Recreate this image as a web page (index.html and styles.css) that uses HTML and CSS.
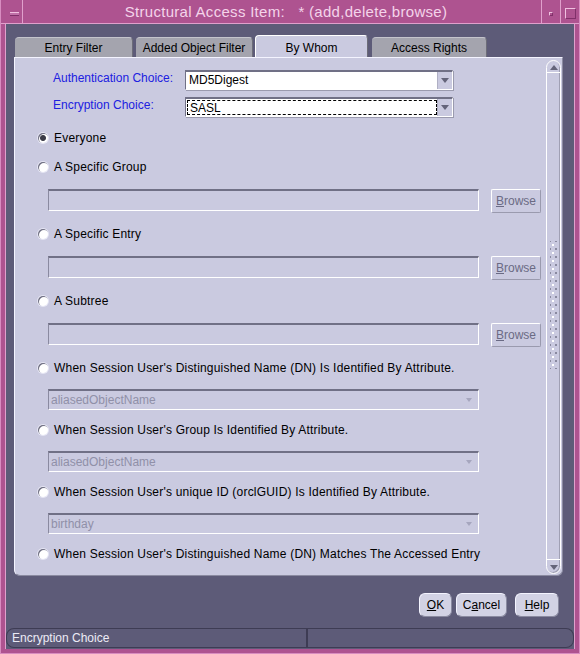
FILE: index.html
```html
<!DOCTYPE html>
<html>
<head>
<title>Structural Access Item</title>
<link rel="stylesheet" href="styles.css">
</head>
<body>
<div class="window">
	<div class="titlebar">
		<div class="tbBtn menuBtn"><span class="menuGlyph"></span></div>
		<div class="title">Structural Access Item:&nbsp;&nbsp; * (add,delete,browse)</div>
		<div class="tbBtn minBtn"><span class="minGlyph"></span></div>
		<div class="tbBtn maxBtn"><span class="maxGlyph"></span></div>
	</div>
	<div class="frameBody">
		<div class="tabs">
			<div class="tab tab1">Entry Filter</div>
			<div class="tab tab2">Added Object Filter</div>
			<div class="tab tab3 active">By Whom</div>
			<div class="tab tab4">Access Rights</div>
		</div>
		<div class="panel">
			<div class="content">
				<div class="choices">
					<div class="lbl">Authentication Choice:</div>
					<div class="combo"><div class="comboText">MD5Digest</div><div class="comboArrow"><span class="tri"></span></div></div>
					<div class="lbl">Encryption Choice:</div>
					<div class="combo focus"><div class="comboText">SASL</div><div class="comboArrow"><span class="tri"></span></div></div>
				</div>

				<div class="radioRow first"><span class="radio checked"></span>Everyone</div>

				<div class="radioRow"><span class="radio"></span>A Specific Group</div>
				<div class="fieldRow"><div class="field"></div><div class="browseBtn"><u>B</u>rowse</div></div>

				<div class="radioRow"><span class="radio"></span>A Specific Entry</div>
				<div class="fieldRow"><div class="field"></div><div class="browseBtn"><u>B</u>rowse</div></div>

				<div class="radioRow"><span class="radio"></span>A Subtree</div>
				<div class="fieldRow"><div class="field"></div><div class="browseBtn"><u>B</u>rowse</div></div>

				<div class="radioRow"><span class="radio"></span>When Session User's Distinguished Name (DN) Is Identified By Attribute.</div>
				<div class="attrCombo"><div class="comboText">aliasedObjectName</div><span class="tri"></span></div>

				<div class="radioRow short"><span class="radio"></span>When Session User's Group Is Identified By Attribute.</div>
				<div class="attrCombo"><div class="comboText">aliasedObjectName</div><span class="tri"></span></div>

				<div class="radioRow short"><span class="radio"></span>When Session User's unique ID (orclGUID) Is Identified By Attribute.</div>
				<div class="attrCombo"><div class="comboText">birthday</div><span class="tri"></span></div>

				<div class="radioRow short"><span class="radio"></span>When Session User's Distinguished Name (DN) Matches The Accessed Entry</div>
			</div>
			<div class="scrollbar">
				<div class="sbUp"><span class="triUp"></span></div>
				<div class="sbTrack"><div class="grip"></div></div>
				<div class="sbDown"><span class="tri"></span></div>
			</div>
		</div>
		<div class="actions">
			<div class="btn okBtn"><u>O</u>K</div>
			<div class="btn cancelBtn">C<u>a</u>ncel</div>
			<div class="btn helpBtn"><u>H</u>elp</div>
		</div>
		<div class="status">
			<div class="statusCell left">Encryption Choice</div>
			<div class="statusCell right"></div>
		</div>
	</div>
</div>
</body>
</html>
```
FILE: styles.css
```css
html, body {
	margin: 0;
	padding: 0;
	background: #5d5b78;
}

body {
	font-family: "Liberation Sans", Arial, sans-serif;
	font-size: 12px;
	color: #000;
}

.window {
	width: 580px;
	height: 654px;
	background: #ae5390;
	display: flex;
	flex-direction: column;
	box-sizing: border-box;
	border: 1px solid #d88cc0;
	border-top: none;
}

/* title bar */
.titlebar {
	height: 23px;
	display: flex;
	border-bottom: 1px solid #e0a0cc;
}

.tbBtn {
	position: relative;
	border-right: 1px solid #e0a0cc;
}

.menuBtn {
	width: 21px;
}

.menuGlyph {
	position: absolute;
	left: 9px;
	top: 12px;
	width: 9px;
	height: 2px;
	border-top: 1px solid #f0c0e0;
	border-bottom: 1px solid #80306a;
	background: #c070a8;
}

.title {
	flex: 1;
	text-align: center;
	color: #f4d4ea;
	font-size: 15px;
	line-height: 24px;
	letter-spacing: 0.3px;
	border-right: 1px solid #e0a0cc;
	padding-left: 8px;
}

.minBtn {
	width: 18px;
}

.minGlyph {
	position: absolute;
	left: 7px;
	top: 12px;
	width: 2px;
	height: 2px;
	border-top: 1px solid #f0c0e0;
	border-left: 1px solid #f0c0e0;
	border-bottom: 1px solid #80306a;
	border-right: 1px solid #80306a;
}

.maxBtn {
	width: 18px;
	border-right: none;
}

.maxGlyph {
	position: absolute;
	left: 4px;
	top: 8px;
	width: 9px;
	height: 9px;
	border-top: 1px solid #f0c0e0;
	border-left: 1px solid #f0c0e0;
	border-bottom: 1px solid #80306a;
	border-right: 1px solid #80306a;
}

/* main body */
.frameBody {
	flex: 1;
	margin: 0 4px 4px 4px;
	background: #5d5b78;
	display: flex;
	flex-direction: column;
	padding-top: 13px;
	border-left: 1px solid #e0a0cc;
	border-right: 1px solid #e0a0cc;
}

.tabs {
	display: flex;
	height: 20px;
	margin-left: 9px;
}

.tab {
	height: 20px;
	box-sizing: border-box;
	background: #a4a4ae;
	text-align: center;
	line-height: 21px;
	border-radius: 4px 4px 0 0;
	border-top: 1px solid #c4c4cc;
	border-right: 1px solid #6c6c78;
}

.tab1 { width: 118px; margin-right: 3px; }
.tab2 { width: 117px; margin-right: 2px; }
.tab3 { width: 113px; margin-right: 4px; }
.tab4 { width: 115px; }

.tab.active {
	background: #cacae0;
	border-top: 1px solid #fff;
	border-left: 1px solid #fff;
	border-right: 1px solid #6c6c78;
	height: 22px;
	margin-top: -2px;
	line-height: 24px;
}

.panel {
	margin-left: 8px;
	width: 549px;
	height: 519px;
	box-sizing: border-box;
	background: #cacae0;
	border-left: 1px solid #f4f4ff;
	border-top: 1px solid #f4f4ff;
	border-right: 1px solid #8a8aa0;
	border-bottom: 1px solid #8a8aa0;
	border-radius: 0 0 6px 6px;
	display: flex;
}

.content {
	flex: 1;
	padding-top: 12px;
}

.choices {
	display: grid;
	grid-template-columns: 132px 268px;
	grid-row-gap: 7px;
	padding-left: 38px;
}

.lbl {
	color: #2020e0;
	line-height: 16px;
}

.combo {
	height: 20px;
	box-sizing: border-box;
	display: flex;
	background: #fff;
	border-top: 2px solid #707086;
	border-left: 1px solid #707086;
	border-bottom: 1px solid #fff;
	border-right: 1px solid #fff;
	box-shadow: 1px 1px 0 #9a9aae;
}

.comboText {
	flex: 1;
	line-height: 17px;
	padding-left: 3px;
}

.combo.focus .comboText {
	border: 1px dashed #000;
	line-height: 15px;
	margin: 1px 0 1px 1px;
	padding-left: 2px;
}

.comboArrow {
	width: 14px;
	background: #cacae0;
	display: flex;
	align-items: center;
	justify-content: center;
	border-left: 1px solid #b0b0c4;
}

.tri {
	width: 0;
	height: 0;
	border-left: 4px solid transparent;
	border-right: 4px solid transparent;
	border-top: 5px solid #64647a;
}

.triUp {
	width: 0;
	height: 0;
	border-left: 4px solid transparent;
	border-right: 4px solid transparent;
	border-bottom: 5px solid #64647a;
}

/* radio rows */
.radioRow {
	height: 16px;
	line-height: 16px;
	display: flex;
	align-items: center;
	padding-left: 23px;
	margin-top: 13px;
	letter-spacing: 0.2px;
}

.radioRow.first {
	margin-top: 13px;
}

.radioRow.short {
	margin-top: 12px;
}

.radio {
	width: 10px;
	height: 10px;
	border-radius: 50%;
	background: #fff;
	box-shadow: inset 1px 1px 0 #6c6c80, 0 0 0 1px #e6e6f4;
	margin-right: 6px;
	flex: none;
}

.radio.checked {
	background: radial-gradient(circle, #3c3c48 0, #3c3c48 2.5px, #fff 3.5px);
}

.fieldRow {
	display: flex;
	height: 24px;
	margin-top: 14px;
	padding-left: 33px;
}

.field {
	width: 431px;
	height: 22px;
	box-sizing: border-box;
	border-top: 2px solid #707086;
	border-left: 1px solid #8a8aa0;
	border-bottom: 1px solid #fff;
	border-right: 1px solid #fff;
}

.browseBtn {
	width: 50px;
	height: 24px;
	box-sizing: border-box;
	margin-left: 12px;
	border: 1px solid #fff;
	border-right-color: #9a9aae;
	border-bottom-color: #9a9aae;
	border-radius: 2px;
	color: #6a6a84;
	text-align: center;
	line-height: 22px;
}

.attrCombo {
	width: 431px;
	height: 21px;
	box-sizing: border-box;
	margin: 13px 0 0 33px;
	display: flex;
	align-items: center;
	padding-right: 6px;
	border-top: 2px solid #707086;
	border-left: 1px solid #8a8aa0;
	border-bottom: 1px solid #fff;
	border-right: 1px solid #fff;
}

.attrCombo .comboText {
	color: #9090a8;
	padding-left: 2px;
}

.attrCombo .tri {
	border-top-color: #a6a6be;
	border-left-width: 3px;
	border-right-width: 3px;
	border-top-width: 4px;
}

/* scrollbar */
.scrollbar {
	width: 15px;
	box-sizing: border-box;
	margin: 2px 1px 1px 0;
	border: 1px solid #fff;
	border-radius: 8px;
	box-shadow: inset -1px -1px 0 #a0a0b4;
	display: flex;
	flex-direction: column;
}

.sbUp {
	height: 12px;
	display: flex;
	justify-content: center;
	padding-top: 4px;
	box-sizing: border-box;
	border-bottom: 1px solid #fff;
}

.sbTrack {
	flex: 1;
	display: flex;
	flex-direction: column;
	justify-content: center;
	align-items: center;
}

.grip {
	width: 8px;
	height: 128px;
	margin-top: -22px;
	background-image: radial-gradient(circle, #fff 0.8px, transparent 1.2px), radial-gradient(circle, #8a8aa0 0.8px, transparent 1.2px);
	background-size: 6px 8px, 6px 8px;
	background-position: 0 0, 3px 4px;
}

.sbDown {
	height: 14px;
	display: flex;
	justify-content: center;
	padding-top: 5px;
	box-sizing: border-box;
	border-top: 1px solid #fff;
}

/* bottom buttons */
.actions {
	display: flex;
	justify-content: flex-end;
	margin-top: 17px;
	height: 24px;
	padding-right: 15px;
}

.btn {
	height: 24px;
	box-sizing: border-box;
	background: #d2d2e4;
	border-radius: 6px;
	border-top: 1px solid #f4f4ff;
	border-left: 1px solid #f4f4ff;
	border-right: 1px solid #8a8aa0;
	border-bottom: 1px solid #8a8aa0;
	text-align: center;
	line-height: 22px;
}

.okBtn { width: 33px; margin-right: 4px; }
.cancelBtn { width: 51px; margin-right: 8px; }
.helpBtn { width: 44px; }

/* status bar */
.status {
	display: flex;
	margin-top: 11px;
	height: 20px;
	margin-bottom: 1px;
}

.statusCell {
	height: 20px;
	box-sizing: border-box;
	border: 1px solid #3e3c54;
	color: #ecebf6;
	line-height: 18px;
}

.statusCell.left {
	width: 302px;
	padding-left: 5px;
	border-radius: 8px 0 0 8px;
	border-right: 2px solid #3e3c54;
}

.statusCell.right {
	flex: 1;
	border-left: none;
	border-radius: 0 8px 8px 0;
}
```
